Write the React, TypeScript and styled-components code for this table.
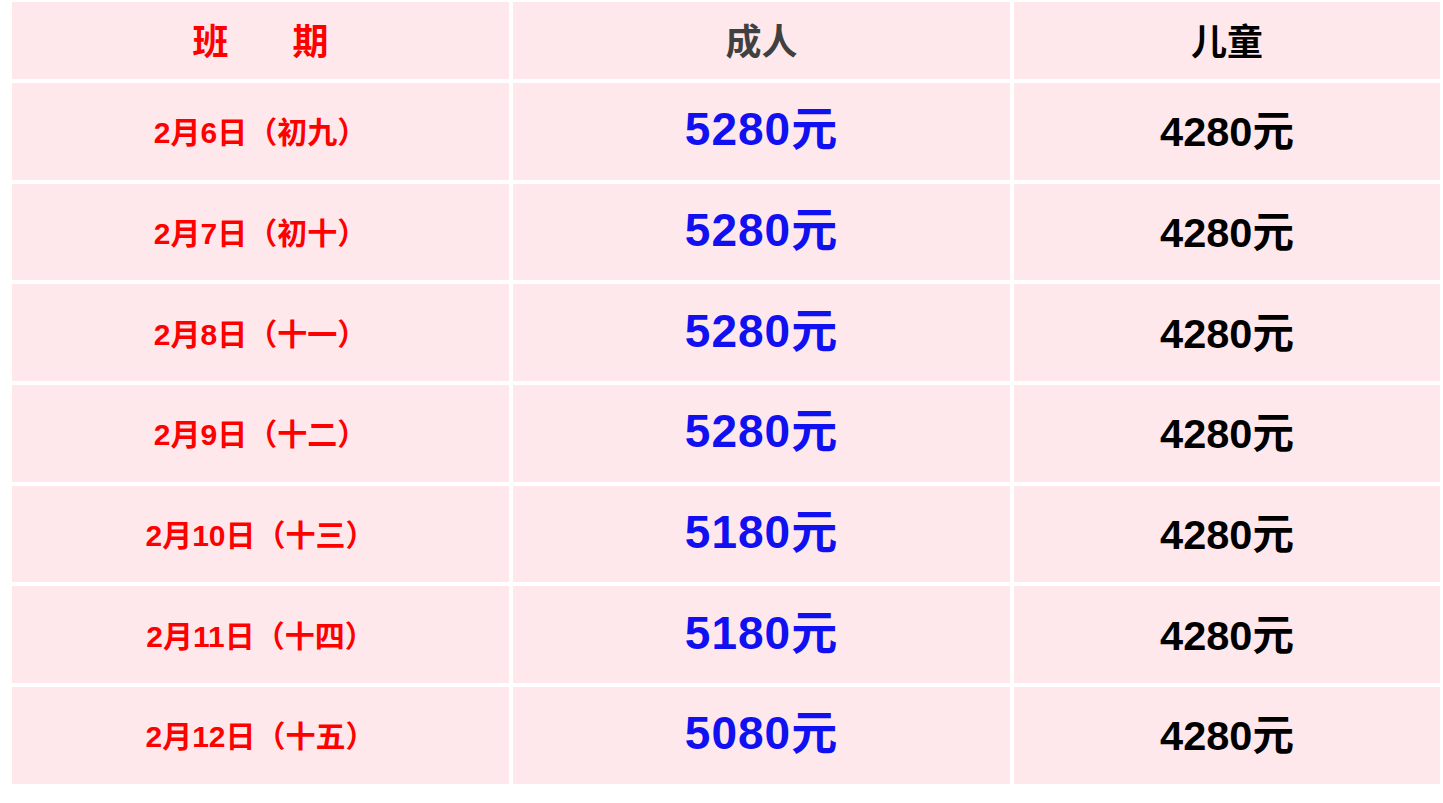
import React from "react";
import styled, { createGlobalStyle } from "styled-components";

const GlobalStyle = createGlobalStyle`
  html, body {
    margin: 0;
    padding: 0;
    background: #ffffff;
  }
  body {
    font-family: "Liberation Sans", "Noto Sans CJK SC", sans-serif;
  }
`;

const Page = styled.div`
  padding: 2px 0 0 12px;
  overflow: hidden;
  width: 1443px;
  box-sizing: border-box;
`;

const Table = styled.div`
  display: grid;
  grid-template-columns: 497px 497px 426px;
  grid-template-rows: 77px repeat(7, 96.7px);
  gap: 4px;
`;

const Cell = styled.div<{ $lift?: number }>`
  background: #ffe8ec;
  display: flex;
  align-items: center;
  justify-content: center;
  font-weight: bold;
  font-family: "Liberation Sans", "Noto Sans CJK SC", sans-serif;
  white-space: nowrap;
  box-sizing: border-box;
  padding-bottom: ${(p) => p.$lift ?? 0}px;
`;

const HeaderCell = styled(Cell)<{ $color: string }>`
  font-size: 36px;
  color: ${(p) => p.$color};
  gap: 64px;
`;

const DateCell = styled(Cell)`
  font-size: 30px;
  color: #ff0000;
`;

const AdultCell = styled(Cell)`
  font-size: 46px;
  color: #1010f0;
  letter-spacing: 1px;
`;

const ChildCell = styled(Cell)`
  font-size: 41.5px;
  color: #000000;
`;

const rows = [
  { date: "2月6日（初九）", adult: "5280元", child: "4280元" },
  { date: "2月7日（初十）", adult: "5280元", child: "4280元" },
  { date: "2月8日（十一）", adult: "5280元", child: "4280元" },
  { date: "2月9日（十二）", adult: "5280元", child: "4280元" },
  { date: "2月10日（十三）", adult: "5180元", child: "4280元" },
  { date: "2月11日（十四）", adult: "5180元", child: "4280元" },
  { date: "2月12日（十五）", adult: "5080元", child: "4280元" },
];

export default function App() {
  return (
    <Page>
      <GlobalStyle />
      <Table>
        <HeaderCell $color="#ff0000" $lift={4}>
          <span>班</span>
          <span>期</span>
        </HeaderCell>
        <HeaderCell $color="#404040" $lift={4}>成人</HeaderCell>
        <HeaderCell $color="#000000" $lift={4}>儿童</HeaderCell>
        {rows.map((r) => (
          <React.Fragment key={r.date}>
            <DateCell $lift={2}>{r.date}</DateCell>
            <AdultCell $lift={12}>{r.adult}</AdultCell>
            <ChildCell $lift={6}>{r.child}</ChildCell>
          </React.Fragment>
        ))}
      </Table>
    </Page>
  );
}
